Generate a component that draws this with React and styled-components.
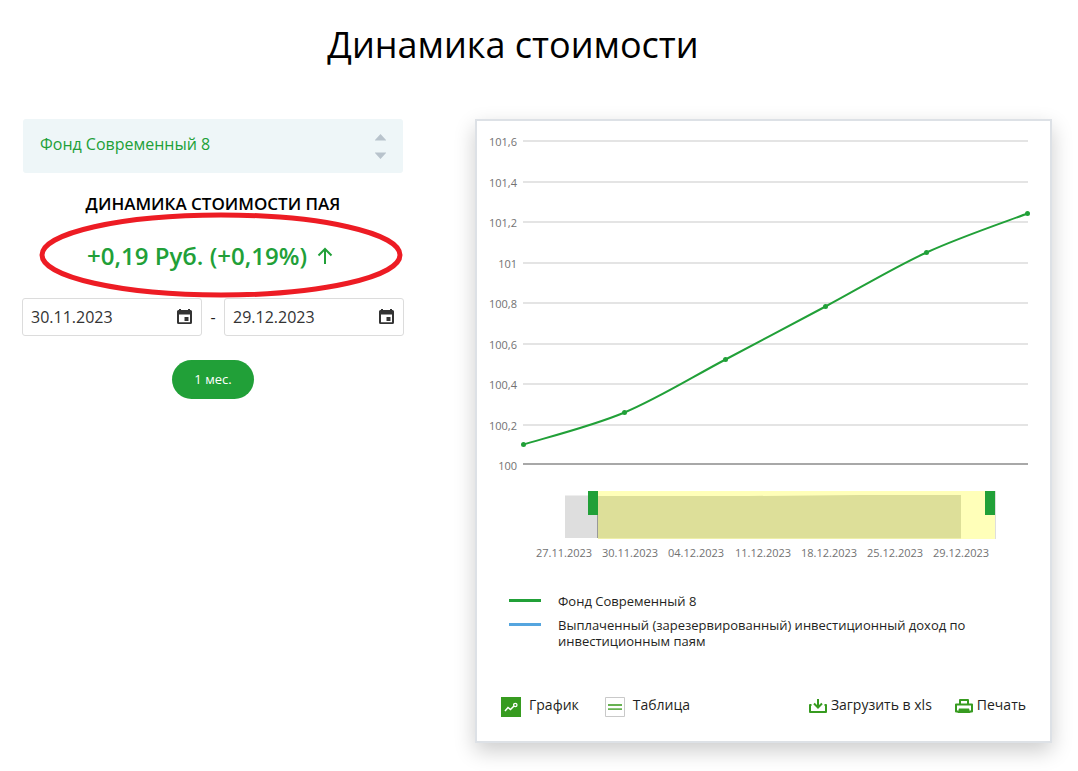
import React, { useState } from 'react';
import styled, { createGlobalStyle } from 'styled-components';

const GlobalStyle = createGlobalStyle`
  * {
    box-sizing: border-box;
  }
  body {
    margin: 0;
    background: #fff;
    color: #1f1f22;
    font-family: 'Open Sans', 'Noto Sans', sans-serif;
  }
  button,
  input,
  select {
    font-family: inherit;
  }
`;

const Page = styled.main`
  padding: 20px 26px 28px 22px;
`;

const Title = styled.h1`
  margin: 0 24px 49px 0;
  padding-right: 24px;
  color: #000;
  font-size: 36px;
  font-weight: 400;
  line-height: 50px;
  text-align: center;
`;

const Columns = styled.div`
  display: grid;
  grid-template-columns: minmax(0, 382px) minmax(0, 1fr);
  gap: 71px;
  align-items: start;
`;

const Panel = styled.section`
  display: flex;
  flex-direction: column;
  align-items: center;
`;

const SelectBox = styled.label`
  position: relative;
  display: block;
  width: 100%;
  padding: 0 1px;

  select {
    width: 100%;
    height: 54px;
    padding: 0 48px 5px 17px;
    border: 0;
    border-radius: 3px;
    appearance: none;
    background: #eef6f8;
    color: #21a038;
    font-size: 16px;
  }
  svg {
    position: absolute;
    top: 15px;
    right: 18px;
    pointer-events: none;
  }
`;

const PanelTitle = styled.h2`
  margin: 19px 0 0;
  color: #000;
  font-size: 17px;
  font-weight: 600;
  line-height: 24px;
  text-transform: uppercase;
`;

const Change = styled.div`
  position: relative;
  display: flex;
  align-items: center;
  justify-content: center;
  gap: 10px;
  width: 100%;
  height: 82px;
  padding: 0 6px 2px 0;
  color: #21a038;
  font-size: 24px;
  font-weight: 600;
  line-height: 32px;
`;

const Marker = styled.svg`
  position: absolute;
  top: -5px;
  left: 17px;
  pointer-events: none;
`;

const Dates = styled.div`
  display: flex;
  align-items: center;
  justify-content: space-between;
  width: 100%;
  font-size: 16px;
`;

const DateField = styled.div`
  display: flex;
  align-items: center;
  width: 180px;
  height: 38px;
  padding: 0 9px 0 8px;
  border: 1px solid #dcdcdc;
  border-radius: 3px;

  input {
    flex: 1;
    min-width: 0;
    padding: 0;
    border: 0;
    outline: 0;
    background: none;
    color: #333;
    font-size: 16px;
  }
  button {
    display: flex;
    padding: 0;
    border: 0;
    background: none;
    color: #333;
  }
`;

const Period = styled.button`
  height: 39px;
  margin-top: 24px;
  padding: 0 22px 2px;
  border: 0;
  border-radius: 20px;
  background: #21a038;
  color: #fff;
  font-size: 13px;
`;

const Card = styled.section`
  border: 2px solid #dde1e6;
  background: #fff;
  box-shadow: 0 8px 20px rgba(0, 0, 0, 0.2);
`;

const Plot = styled.svg`
  display: block;
  width: 100%;
  height: auto;
  font-size: 11px;
  fill: #727272;
`;

const Legend = styled.ul`
  display: flex;
  flex-direction: column;
  gap: 8px;
  margin: 27px 0 0;
  padding: 0 80px 0 32px;
  list-style: none;
  font-size: 13px;
  line-height: 16px;
`;

const LegendItem = styled.li`
  display: flex;
  gap: 17px;

  &::before {
    content: '';
    flex: none;
    width: 32px;
    height: 3px;
    margin-top: 6px;
    background: ${(props) => props.$color};
  }
`;

const Tools = styled.div`
  display: flex;
  align-items: center;
  justify-content: space-between;
  margin-top: 46px;
  padding: 0 24px 24px;
`;

const ToolGroup = styled.div`
  display: flex;
  gap: ${(props) => props.$gap}px;
`;

const Tool = styled.button`
  display: flex;
  align-items: flex-end;
  gap: ${(props) => props.$gap}px;
  padding: 0;
  border: 0;
  background: none;
  color: #1f1f22;
  font-size: 14px;
  line-height: 20px;
  cursor: pointer;

  span {
    padding-bottom: 2px;
  }
`;

const ticks = [
  ['101,6', 20],
  ['101,4', 61],
  ['101,2', 101],
  ['101', 142],
  ['100,8', 182],
  ['100,6', 223],
  ['100,4', 263],
  ['100,2', 304],
];

const points = [
  [46.5, 323.5],
  [147.5, 291.5],
  [248.5, 238.5],
  [348.5, 185.5],
  [449.5, 131.5],
  [550.5, 92.5],
];

const days = [
  ['27.11.2023', 87],
  ['30.11.2023', 153],
  ['04.12.2023', 219],
  ['11.12.2023', 286],
  ['18.12.2023', 352],
  ['25.12.2023', 418],
  ['29.12.2023', 484],
];

const CalendarIcon = () => (
  <svg width="15" height="16" viewBox="0 0 15 16" fill="currentColor" aria-hidden="true">
    <path
      fillRule="evenodd"
      d="M2 1V0h2v1h7V0h2v1h.5A1.5 1.5 0 0 1 15 2.500V13.500A1.500 1.500 0 0 1 13.500 15H1.500A1.500 1.500 0 0 1 0 13.500V2.500A1.500 1.500 0 0 1 1.500 1zM2 5.500v7.700h11V5.500z"
    />
    <path d="M7.500 8h4v4h-4z" />
  </svg>
);

const ArrowsIcon = () => (
  <svg width="11" height="25" viewBox="0 0 11 25" fill="#b8c3cc" aria-hidden="true">
    <path d="M5.500 0 11 6v.5H0V6zM0 18.500h11v.5l-5.500 6L0 19z" />
  </svg>
);

const UpIcon = () => (
  <svg width="16" height="18" viewBox="0 0 16 18" fill="none" stroke="#21a038" strokeWidth="2" aria-hidden="true">
    <path d="M8 17V2M1.500 8.500 8 2l6.500 6.500" />
  </svg>
);

const GraphIcon = () => (
  <svg width="20" height="20" viewBox="0 0 20 20" fill="none" aria-hidden="true">
    <path fill="#379b20" d="M0 0h20v20H0z" />
    <path stroke="#fff" strokeWidth="1.500" d="m4 14 3-3.500 2.500 2L13 9" />
    <circle cx="14.300" cy="8" r="1.700" stroke="#fff" strokeWidth="1.300" />
  </svg>
);

const TableIcon = () => (
  <svg width="20" height="20" viewBox="0 0 20 20" fill="none" aria-hidden="true">
    <path stroke="#c9c9c9" d="M.5.5h19v19H.5z" />
    <path stroke="#68b252" strokeWidth="1.800" d="M3 8h14M3 12.200h14" />
  </svg>
);

const DownloadIcon = () => (
  <svg width="18" height="18" viewBox="0 0 18 18" fill="none" stroke="#379b20" strokeWidth="2" aria-hidden="true">
    <path strokeLinejoin="round" d="M2.500 6H1v7h16V6h-1.500" />
    <path d="M9 0v8M5 4.500l4 4 4-4" />
  </svg>
);

const PrintIcon = () => (
  <svg width="18" height="18" viewBox="0 0 18 18" fill="none" aria-hidden="true">
    <path stroke="#379b20" strokeWidth="2" strokeLinejoin="round" d="M5 5V1h8v4M3 12.500H1v-7h16v7h-2" />
    <path fill="#379b20" d="M4 9.500h10l1.500 4.500h-13z" />
  </svg>
);

// smooth line through the points, tangents taken from the neighbours
const linePath = points.reduce((path, [x, y], i) => {
  if (i === 0) return `M${x} ${y}`;
  const [px, py] = points[i - 1];
  const before = points[i - 2] || points[i - 1];
  const after = points[i + 1] || points[i];
  return `${path} C${px + (x - before[0]) / 6} ${py + (y - before[1]) / 6} ${
    x - (after[0] - px) / 6
  } ${y - (after[1] - py) / 6} ${x} ${y}`;
}, '');

const Chart = () => (
  <Plot viewBox="0 0 573 445" role="img" aria-label="Динамика стоимости пая">
    {ticks.map(([label, y]) => (
      <g key={label}>
        <path stroke="#e4e4e4" strokeWidth="2" d={`M46 ${y}h505`} />
        <text x="40" y={y + 5} textAnchor="end">
          {label}
        </text>
      </g>
    ))}
    <path stroke="#a8a8a8" strokeWidth="2" d="M46 343h505" />
    <text x="40" y="349" textAnchor="end">
      100
    </text>
    <path fill="none" stroke="#21a038" strokeWidth="2" d={linePath} />
    {points.map(([x, y]) => (
      <circle key={x} cx={x} cy={y} r="2.500" fill="#21a038" />
    ))}
    <path fill="#dedede" d="M88 374.500h33V417H88z" />
    <path fill="#ffffb9" d="M121 370h397v48H121z" />
    <path fill="#dddf99" d="M121 375h150l113-1h100v43.500H121z" />
    <path fill="#999" d="M120 394h1v23h-1z" />
    <path fill="#dedede" d="M518 370h1v48h-1z" />
    <path fill="#21a038" d="M111 370h10v24h-10zM508 370h10v24h-10z" />
    {days.map(([day, x]) => (
      <text key={day} x={x} y="436" textAnchor="middle">
        {day}
      </text>
    ))}
  </Plot>
);

const DateInput = ({ label, initial }) => {
  const [value, setValue] = useState(initial);
  return (
    <DateField>
      <input aria-label={label} value={value} onChange={(e) => setValue(e.target.value)} />
      <button type="button" aria-label="Календарь">
        <CalendarIcon />
      </button>
    </DateField>
  );
};

const App = () => {
  return (
    <>
      <GlobalStyle />
      <Page>
        <Title>Динамика стоимости</Title>
        <Columns>
          <Panel>
            <SelectBox>
              <select aria-label="Фонд">
                <option>Фонд Современный 8</option>
              </select>
              <ArrowsIcon />
            </SelectBox>
            <PanelTitle>Динамика стоимости пая</PanelTitle>
            <Change>
              +0,19 Руб. (+0,19%)
              <UpIcon />
              <Marker width="366" height="88" viewBox="0 0 366 88" fill="none" aria-hidden="true">
                <ellipse cx="182" cy="44" rx="179" ry="40" stroke="#ed1c24" strokeWidth="5" />
              </Marker>
            </Change>
            <Dates>
              <DateInput label="Начало периода" initial="30.11.2023" />
              <span>-</span>
              <DateInput label="Конец периода" initial="29.12.2023" />
            </Dates>
            <Period type="button">1 мес.</Period>
          </Panel>
          <Card>
            <Chart />
            <Legend>
              <LegendItem $color="#21a038">Фонд Современный 8</LegendItem>
              <LegendItem $color="#55a5df">
                Выплаченный (зарезервированный) инвестиционный доход по инвестиционным паям
              </LegendItem>
            </Legend>
            <Tools>
              <ToolGroup $gap={26}>
                <Tool type="button" $gap={8}>
                  <GraphIcon />
                  <span>График</span>
                </Tool>
                <Tool type="button" $gap={8}>
                  <TableIcon />
                  <span>Таблица</span>
                </Tool>
              </ToolGroup>
              <ToolGroup $gap={23}>
                <Tool type="button" $gap={4}>
                  <DownloadIcon />
                  <span>Загрузить в xls</span>
                </Tool>
                <Tool type="button" $gap={4}>
                  <PrintIcon />
                  <span>Печать</span>
                </Tool>
              </ToolGroup>
            </Tools>
          </Card>
        </Columns>
      </Page>
    </>
  );
};

export default App;
